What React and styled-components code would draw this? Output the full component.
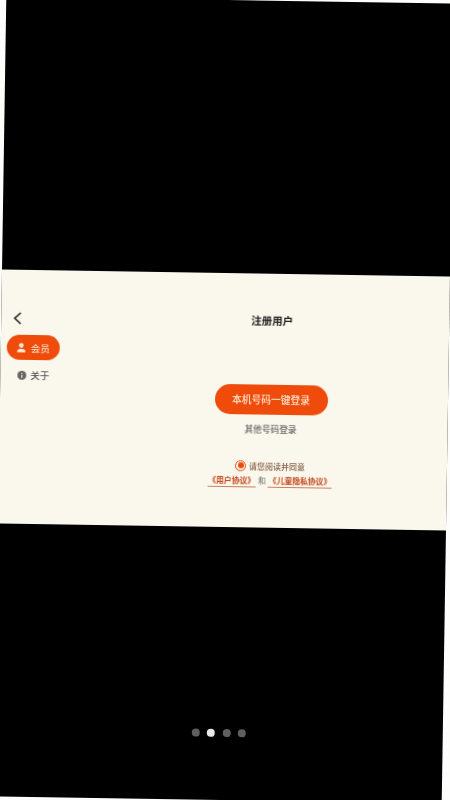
import React from "react";
import styled, { createGlobalStyle } from "styled-components";

const Global = createGlobalStyle`
  html, body { margin: 0; padding: 0; background: #fdfdfb; overflow: hidden; }
  body { font-family: "Noto Sans CJK SC", "Noto Sans", sans-serif; }
`;
const Page = styled.div`
  width: 450px;
  height: 800px;
  overflow: hidden;
`;
const Frame = styled.div`
  width: 448px;
  height: 800px;
  background: #000;
  transform: rotate(0.9deg);
  transform-origin: 224px 400px;
  display: flex;
  flex-direction: column;
  align-items: center;
  padding-top: 273px;
  box-sizing: border-box;
`;
const Panel = styled.div`
  width: 100%;
  height: 254px;
  flex: none;
  background: #faf7ec;
  display: flex;
  filter: blur(0.35px);
`;
const Sidebar = styled.nav`
  width: 94px;
  flex: none;
  box-sizing: border-box;
  padding: 40px 0 0 6px;
  display: flex;
  flex-direction: column;
  align-items: flex-start;
`;
const Back = styled.button`
  border: 0;
  background: none;
  padding: 0;
  margin: 0 0 9px 6px;
  width: 10px;
  height: 16px;
  display: flex;
  align-items: center;
`;
const NavPill = styled.div`
  width: 53px;
  height: 25px;
  border-radius: 13px;
  background: #ef4c0b;
  color: #ffedd9;
  font-size: 9.5px;
  display: flex;
  align-items: center;
  gap: 5px;
  padding-left: 10px;
  box-sizing: border-box;
`;
const NavItem = styled.div`
  margin: 6px 0 0 11px;
  height: 18px;
  color: #3c3c3c;
  font-size: 9.5px;
  display: flex;
  align-items: center;
  gap: 4px;
`;
const Main = styled.main`
  flex: 1;
  display: flex;
  flex-direction: column;
  align-items: center;
  padding-top: 38px;
`;
const Title = styled.h1`
  margin: 0;
  height: 18px;
  line-height: 18px;
  font-size: 10.5px;
  font-weight: 700;
  color: #222;
`;
const LoginButton = styled.button`
  margin-top: 55px;
  width: 113px;
  height: 30px;
  border: 0;
  border-radius: 15px;
  background: #ef4c0b;
  color: #ffe6d2;
  font-family: inherit;
  font-size: 9.75px;
  font-weight: 500;
  padding: 0;
`;
const OtherLogin = styled.div`
  margin-top: 7px;
  height: 16px;
  line-height: 16px;
  font-size: 8.7px;
  font-weight: 500;
  color: #6a6a6a;
`;
const Agree = styled.div`
  margin-top: 21px;
  display: flex;
  align-items: center;
  gap: 3px;
  height: 14px;
  font-size: 8px;
  font-weight: 500;
  color: #85604a;
`;
const Radio = styled.span`
  width: 11px;
  height: 11px;
  box-sizing: border-box;
  border: 1.5px solid #e94b0c;
  border-radius: 50%;
  display: flex;
  align-items: center;
  justify-content: center;
  &::after {
    content: "";
    width: 6px;
    height: 6px;
    border-radius: 50%;
    background: #e94b0c;
  }
`;
const Links = styled.div`
  margin-top: 1px;
  display: flex;
  align-items: flex-start;
  gap: 2px;
  font-size: 7.8px;
  color: #666;
  line-height: 12px;
  padding-top: 1px;
`;
const AgreementLink = styled.a`
  color: #c4461a;
  font-weight: 700;
  border-bottom: 1px solid #c9805f;
  padding: 0 1px;
`;
const Dots = styled.div`
  margin-top: 202px;
  display: flex;
  gap: 7.5px;
`;
const Dot = styled.span`
  width: 8px;
  height: 8px;
  border-radius: 50%;
  background: ${(p) => (p.$active ? "#e8e8e8" : "#5f5f5f")};
`;

const Chevron = () => (
  <svg width="9" height="13" viewBox="0 0 9 13" fill="none">
    <path d="M7.5 1 1.5 6.5 7.5 12" stroke="#222" strokeWidth="1.6" />
  </svg>
);
const Person = () => (
  <svg width="9" height="10" viewBox="0 0 9 10" fill="#ffedd9">
    <circle cx="4.5" cy="2.6" r="2.3" />
    <path d="M.5 9.5V8.2C.5 6.6 2.5 5.9 4.5 5.9s4 .7 4 2.3v1.3Z" />
  </svg>
);
const Info = () => (
  <svg width="9" height="9" viewBox="0 0 9 9">
    <circle cx="4.5" cy="4.5" r="4.5" fill="#666" />
    <rect x="4" y="4" width="1" height="3" fill="#faf7ec" />
    <rect x="4" y="2" width="1" height="1.1" fill="#faf7ec" />
  </svg>
);

export default function App() {
  return (
    <Page>
      <Global />
      <Frame>
        <Panel>
          <Sidebar>
            <Back aria-label="返回"><Chevron /></Back>
            <NavPill><Person />会员</NavPill>
            <NavItem><Info />关于</NavItem>
          </Sidebar>
          <Main>
            <Title>注册用户</Title>
            <LoginButton>本机号码一键登录</LoginButton>
            <OtherLogin>其他号码登录</OtherLogin>
            <Agree><Radio />请您阅读并同意</Agree>
            <Links>
              <AgreementLink>《用户协议》</AgreementLink>
              和
              <AgreementLink>《儿童隐私协议》</AgreementLink>
            </Links>
          </Main>
        </Panel>
        <Dots>
          <Dot />
          <Dot $active />
          <Dot />
          <Dot />
        </Dots>
      </Frame>
    </Page>
  );
}
